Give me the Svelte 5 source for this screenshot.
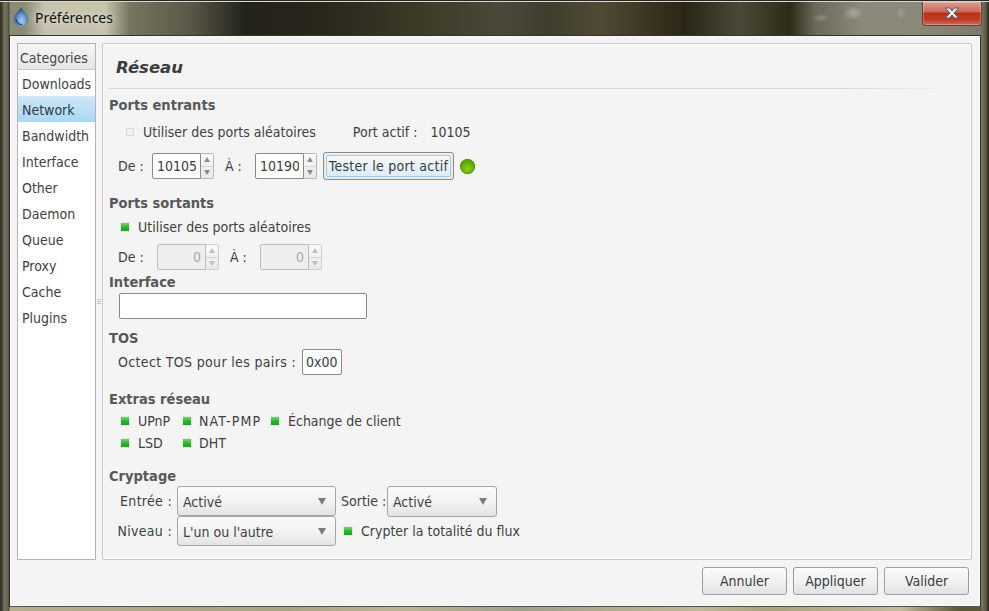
<script>
    const categories = ['Downloads', 'Network', 'Bandwidth', 'Interface', 'Other', 'Daemon', 'Queue', 'Proxy', 'Cache', 'Plugins'];
    let active = 'Network';
</script>

{#snippet spin(value, disabled = false)}
    <span class="spin" class:disabled>
        <input type="text" {value} {disabled} />
        <span class="arrows">
            <i class="up"></i>
            <i class="down"></i>
        </span>
    </span>
{/snippet}

{#snippet check(label, cls = '')}
    <label class="check {cls}"><span class="box"></span>{label}</label>
{/snippet}

{#snippet combo(label, cls)}
    <button class="combo {cls}"><span>{label}</span><i></i></button>
{/snippet}

<div class="glass">
    <header class="titlebar">
        <svg class="app-icon" viewBox="0 0 16 20" width="16" height="20">
            <defs>
                <radialGradient id="drop" cx="0.55" cy="0.7" r="0.65">
                    <stop offset="0" stop-color="#b4cde6" />
                    <stop offset="0.45" stop-color="#6f9ccb" />
                    <stop offset="1" stop-color="#1f4a85" />
                </radialGradient>
            </defs>
            <path d="M8 0.5 C9.5 3.5 15 7 15 12.5 C15 16.5 12 19.5 8 19.5 C4 19.5 1 16.5 1 12.5 C1 7 6.5 3.5 8 0.5 Z" fill="url(#drop)" />
            <path d="M3 12 C3.5 15.5 6 17.5 9 17.5" fill="none" stroke="#1d3f72" stroke-width="1.2" />
        </svg>
        <span class="title">Préférences</span>
        <button class="close" aria-label="Fermer">
            <svg viewBox="0 0 16 12" width="16" height="12">
                <path d="M1.5 1 H5.5 L8 4 L10.5 1 H14.5 L10 6 L14.5 11 H10.5 L8 8 L5.5 11 H1.5 L6 6 Z" fill="#f2f4f8" stroke="#4a4f5c" stroke-width="0.9" />
            </svg>
        </button>
    </header>

    <div class="client">
        <div class="body">
            <nav class="sidebar">
                <div class="side-head">Categories</div>
                {#each categories as c}
                    <div class="side-item" class:active={c === active}>{c}</div>
                {/each}
            </nav>

            <div class="handle"><b></b><b></b><b></b></div>

            <main class="panel">
                <h2>Réseau</h2>

                <h3 class="first">Ports entrants</h3>
                <div class="row r-random">
                    <label class="check off"><span class="box"></span>Utiliser des ports aléatoires</label>
                    <span class="active-label">Port actif :</span>
                    <span class="active-port">10105</span>
                </div>
                <div class="row r-ports">
                    <span class="lbl-de">De :</span>
                    {@render spin('10105')}
                    <span class="lbl-a">À :</span>
                    {@render spin('10190')}
                    <button class="btn test"><span>Tester le port actif</span></button>
                    <span class="led"></span>
                </div>

                <h3 class="outgoing">Ports sortants</h3>
                <div class="row r-check">
                    {@render check('Utiliser des ports aléatoires')}
                </div>
                <div class="row r-ports2">
                    <span class="lbl-de2">De :</span>
                    {@render spin('0', true)}
                    <span class="lbl-a">À :</span>
                    {@render spin('0', true)}
                </div>

                <h3 class="iface">Interface</h3>
                <input class="iface-input" type="text" />

                <h3 class="tos">TOS</h3>
                <div class="row r-tos">
                    <span class="tos-lbl">Octect TOS pour les pairs :</span>
                    <input class="tos-input" type="text" value="0x00" />
                </div>

                <h3 class="extras">Extras réseau</h3>
                <div class="extras-grid">
                    {@render check('UPnP')}
                    {@render check('NAT-PMP', 'nat')}
                    {@render check('Échange de client')}
                    {@render check('LSD')}
                    {@render check('DHT', 'nat-col')}
                </div>

                <h3 class="crypt">Cryptage</h3>
                <div class="row r-crypt">
                    <span class="crypt-lbl">Entrée :</span>
                    {@render combo('Activé', 'wide')}
                    <span class="sortie">Sortie :</span>
                    {@render combo('Activé', 'narrow')}
                </div>
                <div class="row r-crypt">
                    <span class="crypt-lbl">Niveau :</span>
                    {@render combo("L'un ou l'autre", 'wide')}
                    {@render check('Crypter la totalité du flux', 'flux')}
                </div>
            </main>
        </div>

        <footer class="actions">
            <button class="btn">Annuler</button>
            <button class="btn">Appliquer</button>
            <button class="btn">Valider</button>
        </footer>
    </div>
</div>

<style>
    :global(body) { margin: 0; background: #6b6858; }

    .glass {
        box-sizing: border-box;
        width: 989px;
        height: 611px;
        overflow: hidden;
        padding: 0 8px 4px 9px;
        font-family: "DejaVu Sans", "Noto Sans", sans-serif;
        font-stretch: condensed;
        font-size: 14px;
        color: #3f3f3f;
        background:
            linear-gradient(90deg, #33332a 0, #3a3a2c 2px, #77735f 4px, #6d6a58 7px, #4a4a3e 9px, transparent 10px, transparent 981px, #77745f 982px, #5c5a42 986px, #24221a 989px),
            linear-gradient(90deg, #b7af8e 0, #a8a384 280px, #bdb595 400px, #9fa08c 520px, #c0b896 700px, #a9a37c 770px, #c4bc9c 900px, #5a5636 960px, #5a5636 989px) 0 100% / 100% 4px no-repeat,
            linear-gradient(90deg, #8a8a75 0, #8a8a75 24px, #c5c2ae 45px, #c6c3af 105px, #77745f 130px, #5a5848 190px, #23221a 245px, #2a271c 330px, #3e3a28 420px, #4a4838 500px, #3f3e2e 550px, #4f4a34 600px, #2a2616 685px, #4c4837 740px, #2e2a18 790px, #6a6858 815px, #8b897a 860px, #8a8878 920px, #7a7868 989px);
    }

    .titlebar {
        display: flex;
        align-items: center;
        height: 35px;
        margin-left: -9px;
        margin-right: -8px;
        padding-left: 13px;
        box-sizing: border-box;
        border-top: 1px solid #2a2a24;
        box-shadow: inset 0 1px 0 #d8d8cc;
        /* ghost of the min/max glyphs blurred through the glass */
        background:
            radial-gradient(ellipse 9px 4px at 821px 17px, rgba(255,255,255,0.22), transparent),
            radial-gradient(ellipse 10px 7px at 853px 12px, rgba(255,255,255,0.3), transparent),
            radial-gradient(ellipse 5px 7px at 901px 12px, rgba(255,255,255,0.18), transparent);
    }
    .app-icon { flex: none; margin-top: -2px; }
    .title {
        margin-left: 6px;
        margin-top: -2px;
        font-family: "Noto Sans", sans-serif;
        font-size: 14px;
        color: #101010;
        text-shadow: 0 0 6px #e4e0d0, 0 0 10px #d8d4c2;
    }
    .close {
        margin-left: auto;
        margin-right: 7px;
        margin-top: -9px;
        width: 60px;
        height: 24px;
        padding: 0;
        display: flex;
        align-items: center;
        justify-content: center;
        border: 1px solid #6d3a32;
        border-top: 0;
        border-radius: 0 0 4px 4px;
        background: linear-gradient(180deg, #dc9a8c 0, #c9705e 40%, #b8321a 50%, #bc3a20 75%, #cf6a56 100%);
        box-shadow: inset 0 0 0 1px rgba(255,255,255,0.28);
    }

    .client {
        box-sizing: border-box;
        height: 572px;
        background: #f4f4f4;
        border: 1px solid #33332c;
        border-bottom-color: #55534a;
        box-shadow: inset 0 0 0 1px #f9f9f9;
    }
    .body {
        display: flex;
        padding: 7px 7px 0 7px;
        height: 517px;
        box-sizing: content-box;
    }

    .sidebar {
        box-sizing: border-box;
        width: 79px;
        height: 517px;
        flex: none;
        background: #fff;
        border: 1px solid #b4b4b4;
    }
    .side-head {
        box-sizing: border-box;
        height: 26px;
        line-height: 28px;
        padding-left: 2px;
        background: linear-gradient(180deg, #f6f6f6, #e6e6e6);
        border-bottom: 1px solid #c9c9c9;
        color: #484848;
    }
    .side-item {
        height: 26px;
        line-height: 28px;
        padding-left: 4px;
        color: #414141;
    }
    .side-item.active {
        background: linear-gradient(180deg, #cfe7f7, #a9d7f3);
        color: #2f3a42;
    }

    .handle {
        width: 6px;
        flex: none;
        display: flex;
        flex-direction: column;
        justify-content: center;
        align-items: center;
        gap: 1px;
    }
    .handle b { width: 4px; height: 1px; background: #c2c2c2; }

    .panel {
        box-sizing: border-box;
        width: 870px;
        height: 517px;
        flex: none;
        padding: 0 0 0 6px;
        border: 1px solid #c8c8c8;
        border-radius: 2px;
        box-shadow: inset 0 0 0 1px #fbfbfb;
    }
    h2 {
        box-sizing: border-box;
        margin: 0 11px 0 0;
        height: 45px;
        line-height: 47px;
        padding-left: 7px;
        font-size: 16.5px;
        font-weight: 700;
        font-style: italic;
        font-stretch: normal;
        color: #3c3c3c;
        border-bottom: 1px solid;
        border-image: linear-gradient(90deg, #d8d8d8 0, #d8d8d8 85%, #f4f4f4 100%) 1;
    }
    h3 {
        margin: 0;
        height: 20px;
        line-height: 21px;
        font-size: 14.5px;
        font-weight: 700;
        color: #585858;
    }
    h3.first { margin-top: 6px; }
    h3.outgoing { margin-top: 13px; }
    h3.iface { margin-top: 2px; }
    h3.tos { margin-top: 9px; }
    h3.extras { margin-top: 14px; }
    h3.crypt { margin-top: 12px; }

    .row { display: flex; align-items: center; }
    .r-random { height: 24px; margin-top: 5px; padding-left: 16px; }
    .r-ports { height: 28px; margin-top: 8px; padding-left: 9px; }
    .r-check { height: 20px; margin-top: 4px; padding-left: 11px; }
    .r-ports2 { height: 26px; margin-top: 7px; padding-left: 9px; }
    .r-tos { height: 26px; margin-top: 1px; padding-left: 9px; }
    .r-crypt { height: 30px; }

    .tos-lbl { width: 184px; letter-spacing: 0.34px; white-space: nowrap; }
    .active-label { margin-left: 37px; }
    .active-port { margin-left: 13px; }
    .lbl-de { width: 34px; }
    .lbl-de2 { width: 39px; }
    .lbl-a { width: 30px; margin-left: 11px; }
    .led {
        width: 15px;
        height: 15px;
        margin-left: 6px;
        border-radius: 50%;
        background: radial-gradient(circle at 50% 65%, #86d40f 0, #5fae06 55%, #3f8204 100%);
        box-shadow: inset 0 0 0 1px #5d9226;
    }

    .check { display: flex; align-items: center; }
    .box {
        box-sizing: border-box;
        width: 8px;
        height: 8px;
        margin: -1px 9px 0 1px;
        flex: none;
        background: linear-gradient(180deg, #72d66c 0, #2fb52f 50%, #1fa020 100%);
        box-shadow: 0 0 0 1px #e2e8e2;
    }
    .off .box {
        background: #f1f1f1;
        border: 1px solid #dcdcdc;
        box-shadow: none;
    }
    .nat { letter-spacing: 1.2px; }
    .nat .box, .nat-col .box { margin-right: 8px; }

    .spin {
        display: inline-flex;
        box-sizing: border-box;
        width: 62px;
        height: 26px;
        flex: none;
    }
    .spin input {
        box-sizing: border-box;
        width: 49px;
        height: 26px;
        padding: 0 4px;
        text-align: left;
        font: inherit;
        color: #3c3c3c;
        background: #fff;
        border: 1px solid #8a8a8a;
        border-radius: 2px 0 0 2px;
        outline: none;
    }
    .spin .arrows {
        box-sizing: border-box;
        width: 13px;
        display: flex;
        flex-direction: column;
        border: 1px solid #b8b8b8;
        border-left: 0;
        border-radius: 0 2px 2px 0;
        background: linear-gradient(180deg, #fafafa, #e8e8e8);
    }
    .arrows i { flex: 1; display: flex; align-items: center; justify-content: center; }
    .arrows i::before {
        content: "";
        border-left: 3.5px solid transparent;
        border-right: 3.5px solid transparent;
    }
    .arrows .up::before { border-bottom: 5px solid #8c8c8c; }
    .arrows .down::before { border-top: 5px solid #8c8c8c; }
    .arrows .up { border-bottom: 1px solid #d4d4d4; }

    .spin.disabled input {
        background: #eeeeee;
        border-color: #bdbdbd;
        color: #a8a8a8;
        text-align: right;
    }
    .spin.disabled .arrows { border-color: #cfcfcf; }
    .spin.disabled .up::before { border-bottom-color: #c0c0c0; }
    .spin.disabled .down::before { border-top-color: #c0c0c0; }

    .btn {
        box-sizing: border-box;
        height: 28px;
        padding: 0;
        font: inherit;
        color: #3a3a3a;
        border: 1px solid #9d9d9d;
        border-radius: 3px;
        background: linear-gradient(180deg, #fbfbfb 0, #f1f1f1 50%, #e2e2e2 100%);
    }
    .test {
        width: 131px;
        margin-left: 6px;
        padding: 2px;
        border-color: #8b8b8b;
        background: #ececec;
    }
    .test span {
        display: block;
        height: 22px;
        line-height: 20px;
        box-sizing: border-box;
        border: 1px solid #9fcbec;
        border-radius: 2px;
        background: linear-gradient(180deg, #f4fafe, #dcecf8);
        white-space: nowrap;
        letter-spacing: 0.26px;
    }

    .iface-input {
        display: block;
        box-sizing: border-box;
        width: 248px;
        height: 26px;
        margin: 1px 0 0 10px;
        background: #fff;
        border: 1px solid #8a8a8a;
        border-radius: 2px;
        outline: none;
    }
    .tos-input {
        box-sizing: border-box;
        width: 40px;
        height: 26px;
        padding: 0 3px;
        font: inherit;
        color: #3c3c3c;
        background: #fff;
        border: 1px solid #8a8a8a;
        border-radius: 2px;
        outline: none;
    }

    .extras-grid {
        display: grid;
        grid-template-columns: 62px 88px auto;
        grid-auto-rows: 22px;
        justify-content: start;
        align-items: center;
        padding-left: 11px;
        margin-top: 1px;
    }

    .crypt-lbl { width: 63px; text-align: right; margin-right: 5px; letter-spacing: 0.3px; }
    .combo {
        box-sizing: border-box;
        display: flex;
        align-items: center;
        justify-content: space-between;
        height: 30px;
        padding: 1px 9px 0 5px;
        font: inherit;
        color: #3f3f3f;
        border: 1px solid #a6a6a6;
        border-radius: 3px;
        background: linear-gradient(180deg, #fbfbfb 0, #f2f2f2 55%, #e3e3e3 100%);
    }
    .combo i {
        border-left: 4px solid transparent;
        border-right: 4px solid transparent;
        border-top: 7px solid #7d7d7d;
        margin-top: -1px;
    }
    .wide { width: 159px; }
    .narrow { width: 110px; height: 31px; margin-top: 1px; }
    .sortie { margin-left: 5px; width: 46px; white-space: nowrap; }
    .flux { margin-left: 7px; }

    .actions {
        display: flex;
        justify-content: flex-end;
        gap: 6px;
        padding: 7px 11px 0 0;
    }
    .actions .btn { width: 85px; }
</style>
